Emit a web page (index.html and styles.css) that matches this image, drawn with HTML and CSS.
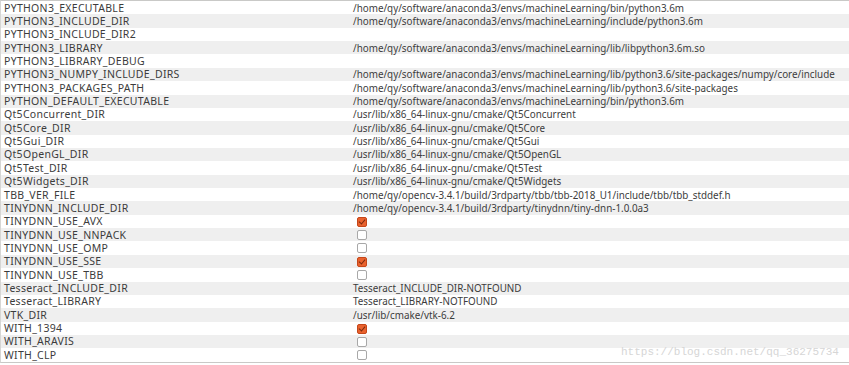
FILE: index.html
```html
<!DOCTYPE html>
<html>
<head>
    <title>CMake Cache</title>
    <link rel="stylesheet" href="styles.css">
</head>
<body>
    <div class="table">
        <div class="row"><span class="name">PYTHON3_EXECUTABLE</span><span class="value">/home/qy/software/anaconda3/envs/machineLearning/bin/python3.6m</span></div>
        <div class="row"><span class="name">PYTHON3_INCLUDE_DIR</span><span class="value">/home/qy/software/anaconda3/envs/machineLearning/include/python3.6m</span></div>
        <div class="row"><span class="name">PYTHON3_INCLUDE_DIR2</span><span class="value"></span></div>
        <div class="row"><span class="name">PYTHON3_LIBRARY</span><span class="value">/home/qy/software/anaconda3/envs/machineLearning/lib/libpython3.6m.so</span></div>
        <div class="row"><span class="name">PYTHON3_LIBRARY_DEBUG</span><span class="value"></span></div>
        <div class="row"><span class="name">PYTHON3_NUMPY_INCLUDE_DIRS</span><span class="value">/home/qy/software/anaconda3/envs/machineLearning/lib/python3.6/site-packages/numpy/core/include</span></div>
        <div class="row"><span class="name">PYTHON3_PACKAGES_PATH</span><span class="value">/home/qy/software/anaconda3/envs/machineLearning/lib/python3.6/site-packages</span></div>
        <div class="row"><span class="name">PYTHON_DEFAULT_EXECUTABLE</span><span class="value">/home/qy/software/anaconda3/envs/machineLearning/bin/python3.6m</span></div>
        <div class="row"><span class="name">Qt5Concurrent_DIR</span><span class="value">/usr/lib/x86_64-linux-gnu/cmake/Qt5Concurrent</span></div>
        <div class="row"><span class="name">Qt5Core_DIR</span><span class="value">/usr/lib/x86_64-linux-gnu/cmake/Qt5Core</span></div>
        <div class="row"><span class="name">Qt5Gui_DIR</span><span class="value">/usr/lib/x86_64-linux-gnu/cmake/Qt5Gui</span></div>
        <div class="row"><span class="name">Qt5OpenGL_DIR</span><span class="value">/usr/lib/x86_64-linux-gnu/cmake/Qt5OpenGL</span></div>
        <div class="row"><span class="name">Qt5Test_DIR</span><span class="value">/usr/lib/x86_64-linux-gnu/cmake/Qt5Test</span></div>
        <div class="row"><span class="name">Qt5Widgets_DIR</span><span class="value">/usr/lib/x86_64-linux-gnu/cmake/Qt5Widgets</span></div>
        <div class="row"><span class="name">TBB_VER_FILE</span><span class="value">/home/qy/opencv-3.4.1/build/3rdparty/tbb/tbb-2018_U1/include/tbb/tbb_stddef.h</span></div>
        <div class="row"><span class="name">TINYDNN_INCLUDE_DIR</span><span class="value">/home/qy/opencv-3.4.1/build/3rdparty/tinydnn/tiny-dnn-1.0.0a3</span></div>
        <div class="row"><span class="name">TINYDNN_USE_AVX</span><span class="value"><span class="check on"></span></span></div>
        <div class="row"><span class="name">TINYDNN_USE_NNPACK</span><span class="value"><span class="check"></span></span></div>
        <div class="row"><span class="name">TINYDNN_USE_OMP</span><span class="value"><span class="check"></span></span></div>
        <div class="row"><span class="name">TINYDNN_USE_SSE</span><span class="value"><span class="check on"></span></span></div>
        <div class="row"><span class="name">TINYDNN_USE_TBB</span><span class="value"><span class="check"></span></span></div>
        <div class="row"><span class="name">Tesseract_INCLUDE_DIR</span><span class="value">Tesseract_INCLUDE_DIR-NOTFOUND</span></div>
        <div class="row"><span class="name">Tesseract_LIBRARY</span><span class="value">Tesseract_LIBRARY-NOTFOUND</span></div>
        <div class="row"><span class="name">VTK_DIR</span><span class="value">/usr/lib/cmake/vtk-6.2</span></div>
        <div class="row"><span class="name">WITH_1394</span><span class="value"><span class="check on"></span></span></div>
        <div class="row"><span class="name">WITH_ARAVIS</span><span class="value"><span class="check"></span></span></div>
        <div class="row"><span class="name">WITH_CLP</span><span class="value"><span class="check"></span></span></div>
        <div class="watermark">https://blog.csdn.net/qq_36275734</div>
    </div>
</body>
</html>
```

FILE: styles.css
```css
body {
    margin: 0;
    background: #ffffff;
    font-family: "Noto Sans", "DejaVu Sans", sans-serif;
    color: #3c3c3c;
}

.table {
    position: relative;
    width: 849px;
    overflow: hidden;
    border-top: 1px solid #c9c9c7;
    border-bottom: 1px solid #c9c9c7;
    border-left: 1px solid #d6d6d4;
    box-sizing: border-box;
}

.row {
    display: grid;
    grid-template-columns: 349px 1fr;
    align-items: start;
    box-sizing: border-box;
    height: 13.37px;
    padding: 0.5px 0 0 3px;
    white-space: nowrap;
    line-height: 12px;
}

.row:nth-child(even) {
    background-color: #efefef;
}

.name {
    font-size: 10.5px;
    letter-spacing: 0.3px;
}

.value {
    font-size: 9.85px;
}

.check {
    display: inline-block;
    width: 10px;
    height: 10px;
    margin-left: 4px;
    margin-top: 1.5px;
    border: 1px solid #a8a8a8;
    border-radius: 2px;
    background: #ffffff;
    vertical-align: top;
    box-sizing: border-box;
}

.check.on {
    border-color: #c5471a;
    background: #e9622e;
    position: relative;
}

.check.on::after {
    content: "";
    position: absolute;
    left: 2px;
    top: 0px;
    width: 3px;
    height: 5px;
    border-right: 1.5px solid #7a2a0e;
    border-bottom: 1.5px solid #7a2a0e;
    transform: rotate(40deg);
}

.watermark {
    position: absolute;
    left: 620px;
    top: 345px;
    font-family: "Liberation Mono", monospace;
    font-size: 11px;
    color: #d6d6d6;
}
```
